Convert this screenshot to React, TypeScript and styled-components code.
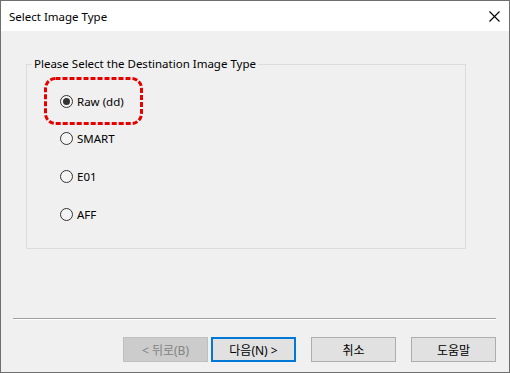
import React from 'react';
import styled, { createGlobalStyle } from 'styled-components';

const GlobalStyle = createGlobalStyle`
  html, body {
    margin: 0;
    padding: 0;
    background: #f0f0f0;
  }
  * {
    box-sizing: border-box;
  }
`;

const FONT = `'Noto Sans', 'Noto Sans CJK KR', sans-serif`;

const Window = styled.div`
  position: relative;
  display: flex;
  flex-direction: column;
  width: 510px;
  height: 373px;
  border: 1px solid #6e6e6e;
  background: #f0f0f0;
  font-family: ${FONT};
  font-size: 11.5px;
  color: #000;
`;

const TitleBar = styled.div`
  display: flex;
  align-items: center;
  justify-content: space-between;
  height: 30px;
  padding: 0 9px 0 8px;
  background: #fff;
`;

const Title = styled.span`
  font-size: 11.5px;
`;

const Body = styled.div`
  display: flex;
  flex-direction: column;
  flex: 1;
`;

const Group = styled.fieldset`
  width: 440px;
  height: 193px;
  margin: 25px 0 0 25px;
  padding: 0 0 0 33px;
  border: 1px solid #dcdcdc;
  min-width: 0;
`;

const Legend = styled.legend`
  margin-left: -28px;
  padding: 0 2px;
  font-size: 11.5px;
  line-height: 16px;
`;

const OptionList = styled.div`
  display: flex;
  flex-direction: column;
  gap: 21.8px;
  padding-top: 21px;
`;

const Option = styled.label`
  display: flex;
  align-items: center;
  gap: 4px;
  height: 16px;
  font-size: 11.5px;
`;

const Radio = styled.span<{ $checked?: boolean }>`
  position: relative;
  width: 13px;
  height: 13px;
  border-radius: 50%;
  border: 1px solid #333;
  background: #f4f4f4;
  display: flex;
  align-items: center;
  justify-content: center;

  &::after {
    content: '';
    display: ${(p) => (p.$checked ? 'block' : 'none')};
    width: 7px;
    height: 7px;
    border-radius: 50%;
    background: #333;
  }
`;

const Separator = styled.div`
  margin: 69px 13px 0 12px;
  height: 2px;
  border-top: 1px solid #a0a0a0;
  border-bottom: 1px solid #fff;
`;

const ButtonRow = styled.div`
  display: flex;
  justify-content: flex-end;
  gap: 15px;
  margin-top: 17px;
  padding-right: 13px;
`;

const Pair = styled.div`
  display: flex;
  gap: 3px;
`;

const Button = styled.button<{ $focus?: boolean }>`
  width: 85px;
  height: 25px;
  padding: 0;
  font-family: ${FONT};
  font-size: 12px;
  color: #000;
  background: #e1e1e1;
  border: ${(p) => (p.$focus ? '2px solid #0078d7' : '1px solid #adadad')};

  &:disabled {
    color: #838383;
    background: #cccccc;
    border-color: #bfbfbf;
  }
`;

const Highlight = styled.svg`
  position: absolute;
  left: 43px;
  top: 76px;
`;

const options = [
  { label: 'Raw (dd)', checked: true },
  { label: 'SMART' },
  { label: 'E01' },
  { label: 'AFF' },
];

export default function App() {
  return (
    <>
      <GlobalStyle />
      <Window>
        <TitleBar>
          <Title>Select Image Type</Title>
          <svg width="11" height="11" viewBox="0 0 11 11">
            <path d="M0.5 0.5 L10.5 10.5 M10.5 0.5 L0.5 10.5" stroke="#000" strokeWidth="1.1" />
          </svg>
        </TitleBar>
        <Body>
          <Group>
            <Legend>Please Select the Destination Image Type</Legend>
            <OptionList>
              {options.map((o) => (
                <Option key={o.label}>
                  <Radio $checked={o.checked} />
                  {o.label}
                </Option>
              ))}
            </OptionList>
          </Group>
          <Separator />
          <ButtonRow>
            <Pair>
              <Button disabled>&lt; 뒤로(B)</Button>
              <Button $focus>다음(N) &gt;</Button>
            </Pair>
            <Button>취소</Button>
            <Button>도움말</Button>
          </ButtonRow>
        </Body>
        <Highlight width="99" height="48" viewBox="0 0 99 48">
          <rect
            x="1.5"
            y="1.5"
            width="96"
            height="45"
            rx="10"
            fill="none"
            stroke="#e60000"
            strokeWidth="3"
            strokeDasharray="5 2"
          />
        </Highlight>
      </Window>
    </>
  );
}
